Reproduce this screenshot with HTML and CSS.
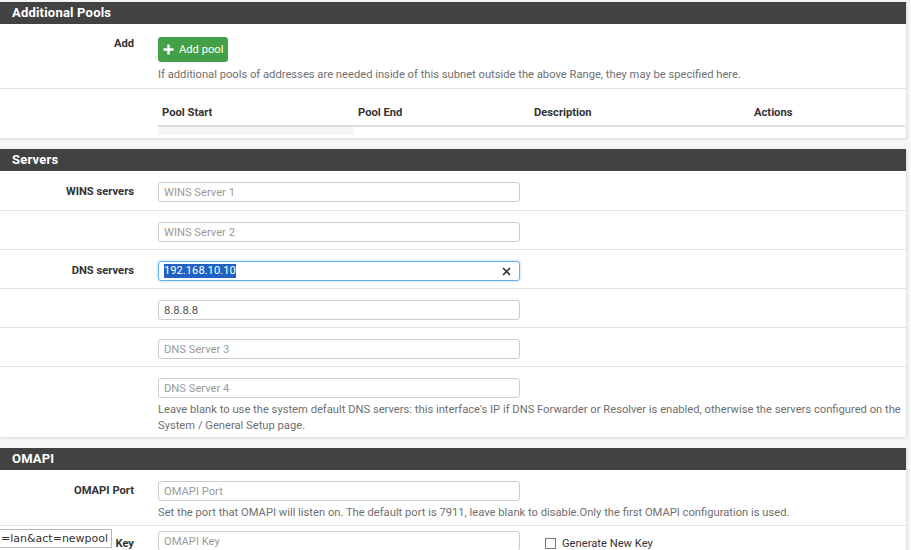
FILE: index.html
```html
<!DOCTYPE html>
<html lang="en">
<head>
    <meta charset="UTF-8">
    <title>DHCP Server: LAN</title>
    <link rel="stylesheet" href="styles.css">
</head>
<body>

    <!-- Additional Pools -->
    <div class="panel">
        <div class="panel-heading">Additional Pools</div>
        <div class="panel-body">
            <div class="form-row add-row">
                <div class="form-label label-top">Add</div>
                <div class="form-control-col">
                    <button class="btn-add">
                        <svg width="11" height="11" viewBox="0 0 11 11"><path d="M5.5 0.5v10M0.5 5.5h10" stroke="#fff" stroke-width="2.4"/></svg>
                        Add pool
                    </button>
                    <div class="help">If additional pools of addresses are needed inside of this subnet outside the above Range, they may be specified here.</div>
                </div>
            </div>
            <div class="form-row table-row">
                <div class="form-label"></div>
                <div class="table-col">
                    <table class="pools">
                        <thead>
                            <tr>
                                <th class="c1">Pool Start</th>
                                <th class="c2">Pool End</th>
                                <th class="c3">Description</th>
                                <th>Actions</th>
                            </tr>
                        </thead>
                        <tbody>
                            <tr><td class="empty"></td><td></td><td></td><td></td></tr>
                        </tbody>
                    </table>
                </div>
            </div>
        </div>
    </div>

    <!-- Servers -->
    <div class="panel">
        <div class="panel-heading">Servers</div>
        <div class="panel-body">
            <div class="form-row">
                <div class="form-label">WINS servers</div>
                <div class="form-control-col"><input type="text" placeholder="WINS Server 1"></div>
            </div>
            <div class="form-row">
                <div class="form-label"></div>
                <div class="form-control-col"><input type="text" placeholder="WINS Server 2"></div>
            </div>
            <div class="form-row">
                <div class="form-label">DNS servers</div>
                <div class="form-control-col">
                    <div class="fake-input focused">
                        <span class="selected">192.168.10.10</span>
                        <svg class="clear" width="9" height="9" viewBox="0 0 9 9"><path d="M1 1l7 7M8 1l-7 7" stroke="#333" stroke-width="1.6"/></svg>
                    </div>
                </div>
            </div>
            <div class="form-row">
                <div class="form-label"></div>
                <div class="form-control-col"><input type="text" value="8.8.8.8"></div>
            </div>
            <div class="form-row">
                <div class="form-label"></div>
                <div class="form-control-col"><input type="text" placeholder="DNS Server 3"></div>
            </div>
            <div class="form-row">
                <div class="form-label"></div>
                <div class="form-control-col">
                    <input type="text" placeholder="DNS Server 4">
                    <div class="help">Leave blank to use the system default DNS servers: this interface's IP if DNS Forwarder or Resolver is enabled, otherwise the servers configured on the System / General Setup page.</div>
                </div>
            </div>
        </div>
    </div>

    <!-- OMAPI -->
    <div class="panel">
        <div class="panel-heading">OMAPI</div>
        <div class="panel-body">
            <div class="form-row">
                <div class="form-label">OMAPI Port</div>
                <div class="form-control-col">
                    <input type="text" placeholder="OMAPI Port">
                    <div class="help">Set the port that OMAPI will listen on. The default port is 7911, leave blank to disable.Only the first OMAPI configuration is used.</div>
                </div>
            </div>
            <div class="form-row key-row">
                <div class="form-label">OMAPI Key</div>
                <div class="form-control-col inline">
                    <input type="text" placeholder="OMAPI Key">
                    <label class="check"><span class="box"></span>Generate New Key</label>
                </div>
            </div>
        </div>
    </div>

    <!-- browser status bubble -->
    <div class="status-bubble">=lan&amp;act=newpool</div>

</body>
</html>
```

FILE: styles.css
```css
/* General Styling */
body {
    font-family: Roboto, "Noto Sans", sans-serif;
    font-size: 11.2px;
    color: #333;
    background: #f7f7f7;
    margin: 0;
    padding: 2px 0 0 0;
    overflow: hidden;
}
/* Panels */
.panel {
    background: #fff;
    margin: 0 4px 11px 0;
    box-shadow: 0 1px 3px rgba(0, 0, 0, 0.12);
    border-right: 1px solid #e4e4e4;
}
.panel-heading {
    background: #424242;
    color: #fff;
    font-size: 13px;
    font-weight: bold;
    height: 22px;
    line-height: 22px;
    padding-left: 12px;
    letter-spacing: 0.2px;
}
/* Form rows */
.form-row {
    display: flex;
    padding: 11px 0 7px 0;
}
.form-row:first-child {
    padding-bottom: 8px;
}
.form-row + .form-row {
    border-top: 1px solid #e3e3e3;
}
.form-label {
    width: 134px;
    flex-shrink: 0;
    text-align: right;
    font-weight: bold;
    line-height: 20px;
    margin-right: 24px;
}
.label-top {
    line-height: 14px;
}
.form-control-col {
    flex: 1;
}
.form-control-col.inline {
    display: flex;
    align-items: flex-start;
}
input, .fake-input {
    display: block;
    box-sizing: border-box;
    width: 362px;
    height: 20px;
    border: 1px solid #ccc;
    border-radius: 3px;
    padding: 0 5px;
    font-family: Roboto, "Noto Sans", sans-serif;
    font-size: 11.2px;
    color: #555;
    background: #fff;
    margin: 0;
}
input::placeholder {
    color: #9a9a9a;
}
.fake-input {
    display: flex;
    align-items: center;
    justify-content: space-between;
    padding: 0 8px 0 5px;
}
.focused {
    border-color: #66afe9;
    box-shadow: 0 0 3px rgba(102, 175, 233, 0.6);
}
.selected {
    background: #1f62c4;
    color: #fff;
    line-height: 14px;
}
.help {
    color: #6f6f6f;
    line-height: 16px;
    margin-top: 4px;
    margin-bottom: -4px;
}
/* Add pool row */
.add-row {
    padding: 13px 0 7px 0;
}
.add-row .help {
    margin-top: 5px;
    margin-bottom: -3px;
}
.btn-add {
    display: flex;
    align-items: center;
    gap: 5px;
    height: 25px;
    padding: 0 5px;
    background: #43a047;
    color: #fff;
    border: none;
    border-radius: 3px;
    font-family: Roboto, "Noto Sans", sans-serif;
    font-size: 11.2px;
    cursor: pointer;
}
/* Pools table */
.table-row {
    padding: 10px 0 3px 0;
}
.table-col {
    flex: 1;
    padding-right: 1px;
}
.pools {
    width: 100%;
    border-collapse: collapse;
}
.pools th {
    text-align: left;
    height: 26px;
    padding: 0 4px;
    border-bottom: 2px solid #ddd;
    font-weight: bold;
}
.pools .c1 { width: 188px; }
.pools .c2 { width: 168px; }
.pools .c3 { width: 212px; }
.pools td {
    height: 8px;
    padding: 0;
}
.pools td.empty {
    background: #f5f5f5;
}
/* OMAPI key */
.key-row {
    padding-top: 5px;
}
.key-row .form-label {
    padding-top: 3px;
}
.check {
    display: flex;
    align-items: center;
    margin: 6px 0 0 25px;
    color: #333;
}
.check .box {
    width: 9px;
    height: 9px;
    border: 1px solid #767676;
    margin-right: 6px;
    background: #fff;
}
/* Status bubble */
.status-bubble {
    position: absolute;
    left: 0;
    top: 529px;
    height: 17px;
    line-height: 17px;
    padding: 0 3px 0 1px;
    background: #fff;
    border: 1px solid #b9b9b9;
    border-left: none;
    font-family: "DejaVu Sans", sans-serif;
    font-size: 11px;
    color: #333;
}
```
